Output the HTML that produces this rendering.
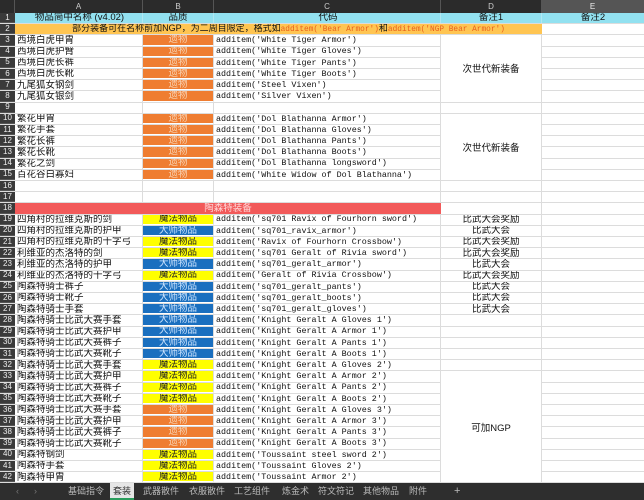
<!DOCTYPE html>
<html><head><meta charset="utf-8"><style>
*{margin:0;padding:0;box-sizing:border-box}
body{width:644px;height:500px;overflow:hidden;background:#fff;position:relative;font-family:"Liberation Sans","Noto Sans CJK SC",sans-serif;font-size:9.5px;color:#111}
.r{position:absolute;left:0;width:644px;height:11.2px;border-bottom:1px solid #dcdcdc}
.c{position:absolute;top:0;height:100%;display:flex;align-items:center;white-space:nowrap;overflow:hidden;line-height:1}
.n{left:0;width:15px;background:#3a3a3a;color:#eee;justify-content:center;font-size:8px;border-bottom:1px solid #555}
.a{left:15px;width:128px;padding-left:2px;border-right:1px solid #dcdcdc}
.b{left:143px;width:71px;justify-content:center;border-right:1px solid #dcdcdc}
.cc{left:214px;width:227px;padding-left:2px;font-family:"Liberation Mono","Noto Sans CJK SC",monospace;font-size:8.4px;border-right:1px solid #dcdcdc}
.d{left:441px;width:101px;justify-content:center;border-right:1px solid #dcdcdc}
.e{left:542px;width:102px}
.o{background:#ef7d31;color:#f8d4b5;border-bottom:1px solid #fff}
.y{background:#ffff00;color:#222;border-bottom:1px solid #fff}
.bl{background:#1a6fbf;color:#cfe6ff;border-bottom:1px solid #fff}
.hd{position:absolute;top:0;height:13px;background:#2b2b2b;color:#ccc;text-align:center;line-height:13px;font-size:8px;border-right:1px solid #555}
.m{position:absolute;background:#fff;display:flex;align-items:center;justify-content:center;font-size:9.5px;border-right:1px solid #dcdcdc;border-bottom:1px solid #dcdcdc}
.tabs{position:absolute;left:0;top:483px;width:644px;height:17px;background:#2e2e2e;color:#bbb;font-size:9px}
.t{position:absolute;top:0;height:17px;line-height:17px}
.k{font-family:"Liberation Mono",monospace;font-size:7.8px;color:#e8601c}
</style></head><body>
<div class="hd" style="left:0;width:15px;background:#2b2b2b"></div>
<div class="hd" style="left:15px;width:128px">A</div>
<div class="hd" style="left:143px;width:71px">B</div>
<div class="hd" style="left:214px;width:227px">C</div>
<div class="hd" style="left:441px;width:101px">D</div>
<div class="hd" style="left:542px;width:102px;background:#555;color:#eee">E</div>

<div class="r" style="top:13px;background:#92e1f0"><div class="c n">1</div><div class="c a" style="justify-content:center;border-color:#b0e8f3">物品简中名称 (v4.02)</div><div class="c b" style="border-color:#b0e8f3">品质</div><div class="c cc" style="justify-content:center;font-family:'Liberation Sans','Noto Sans CJK SC',sans-serif;font-size:9.5px;border-color:#b0e8f3">代码</div><div class="c d" style="border-color:#b0e8f3">备注1</div><div class="c e" style="justify-content:center">备注2</div></div>
<div class="r" style="top:24.2px"><div class="c n">2</div><div class="c" style="left:15px;width:527px;background:#ffc552;justify-content:center;padding-left:20px;font-size:9px"><span>部分装备可在名称前加NGP，为二周目限定，格式如<span class="k">additem('Bear Armor')</span>和<span class="k">additem('NGP Bear Armor')</span></span></div></div>

<div class="r" style="top:35.4px"><div class="c n">3</div><div class="c a">西境白虎甲胄</div><div class="c b o">遗物</div><div class="c cc">additem('White Tiger Armor')</div></div>
<div class="r" style="top:46.6px"><div class="c n">4</div><div class="c a">西境白虎护臂</div><div class="c b o">遗物</div><div class="c cc">additem('White Tiger Gloves')</div></div>
<div class="r" style="top:57.8px"><div class="c n">5</div><div class="c a">西境白虎长裤</div><div class="c b o">遗物</div><div class="c cc">additem('White Tiger Pants')</div></div>
<div class="r" style="top:69px"><div class="c n">6</div><div class="c a">西境白虎长靴</div><div class="c b o">遗物</div><div class="c cc">additem('White Tiger Boots')</div></div>
<div class="r" style="top:80.2px"><div class="c n">7</div><div class="c a">九尾狐女钢剑</div><div class="c b o">遗物</div><div class="c cc">additem('Steel Vixen')</div></div>
<div class="r" style="top:91.4px"><div class="c n">8</div><div class="c a">九尾狐女银剑</div><div class="c b o">遗物</div><div class="c cc">additem('Silver Vixen')</div></div>
<div class="r" style="top:102.6px"><div class="c n">9</div><div class="c a"></div><div class="c b"></div><div class="c cc"></div><div class="c d"></div></div>
<div class="r" style="top:113.8px"><div class="c n">10</div><div class="c a">繁花甲胄</div><div class="c b o">遗物</div><div class="c cc">additem('Dol Blathanna Armor')</div></div>
<div class="r" style="top:125px"><div class="c n">11</div><div class="c a">繁花手套</div><div class="c b o">遗物</div><div class="c cc">additem('Dol Blathanna Gloves')</div></div>
<div class="r" style="top:136.2px"><div class="c n">12</div><div class="c a">繁花长裤</div><div class="c b o">遗物</div><div class="c cc">additem('Dol Blathanna Pants')</div></div>
<div class="r" style="top:147.4px"><div class="c n">13</div><div class="c a">繁花长靴</div><div class="c b o">遗物</div><div class="c cc">additem('Dol Blathanna Boots')</div></div>
<div class="r" style="top:158.6px"><div class="c n">14</div><div class="c a">繁花之剑</div><div class="c b o">遗物</div><div class="c cc">additem('Dol Blathanna longsword')</div></div>
<div class="r" style="top:169.8px"><div class="c n">15</div><div class="c a">百花谷白寡妇</div><div class="c b o">遗物</div><div class="c cc">additem('White Widow of Dol Blathanna')</div></div>
<div class="r" style="top:181px"><div class="c n">16</div><div class="c a"></div><div class="c b"></div><div class="c cc"></div><div class="c d"></div></div>
<div class="r" style="top:192.2px"><div class="c n">17</div><div class="c a"></div><div class="c b"></div><div class="c cc"></div><div class="c d"></div></div>
<div class="r" style="top:203.4px"><div class="c n">18</div><div class="c" style="left:15px;width:426px;background:#f25a5a;color:#ffd8d8;justify-content:center">陶森特装备</div><div class="c d"></div></div>
<div class="r" style="top:214.6px"><div class="c n">19</div><div class="c a">四角村的拉维克斯的剑</div><div class="c b y">魔法物品</div><div class="c cc">additem('sq701 Ravix of Fourhorn sword')</div><div class="c d">比武大会奖励</div></div>
<div class="r" style="top:225.8px"><div class="c n">20</div><div class="c a">四角村的拉维克斯的护甲</div><div class="c b bl">大师物品</div><div class="c cc">additem('sq701_ravix_armor')</div><div class="c d">比武大会</div></div>
<div class="r" style="top:237px"><div class="c n">21</div><div class="c a">四角村的拉维克斯的十字弓</div><div class="c b y">魔法物品</div><div class="c cc">additem('Ravix of Fourhorn Crossbow')</div><div class="c d">比武大会奖励</div></div>
<div class="r" style="top:248.2px"><div class="c n">22</div><div class="c a">利维亚的杰洛特的剑</div><div class="c b y">魔法物品</div><div class="c cc">additem('sq701 Geralt of Rivia sword')</div><div class="c d">比武大会奖励</div></div>
<div class="r" style="top:259.4px"><div class="c n">23</div><div class="c a">利维亚的杰洛特的护甲</div><div class="c b bl">大师物品</div><div class="c cc">additem('sq701_geralt_armor')</div><div class="c d">比武大会</div></div>
<div class="r" style="top:270.6px"><div class="c n">24</div><div class="c a">利维亚的杰洛特的十字弓</div><div class="c b y">魔法物品</div><div class="c cc">additem('Geralt of Rivia Crossbow')</div><div class="c d">比武大会奖励</div></div>
<div class="r" style="top:281.8px"><div class="c n">25</div><div class="c a">陶森特骑士裤子</div><div class="c b bl">大师物品</div><div class="c cc">additem('sq701_geralt_pants')</div><div class="c d">比武大会</div></div>
<div class="r" style="top:293px"><div class="c n">26</div><div class="c a">陶森特骑士靴子</div><div class="c b bl">大师物品</div><div class="c cc">additem('sq701_geralt_boots')</div><div class="c d">比武大会</div></div>
<div class="r" style="top:304.2px"><div class="c n">27</div><div class="c a">陶森特骑士手套</div><div class="c b bl">大师物品</div><div class="c cc">additem('sq701_geralt_gloves')</div><div class="c d">比武大会</div></div>
<div class="r" style="top:315.4px"><div class="c n">28</div><div class="c a">陶森特骑士比武大赛手套</div><div class="c b bl">大师物品</div><div class="c cc">additem('Knight Geralt A Gloves 1')</div><div class="c d"></div></div>
<div class="r" style="top:326.6px"><div class="c n">29</div><div class="c a">陶森特骑士比武大赛护甲</div><div class="c b bl">大师物品</div><div class="c cc">additem('Knight Geralt A Armor 1')</div><div class="c d"></div></div>
<div class="r" style="top:337.8px"><div class="c n">30</div><div class="c a">陶森特骑士比武大赛裤子</div><div class="c b bl">大师物品</div><div class="c cc">additem('Knight Geralt A Pants 1')</div><div class="c d"></div></div>
<div class="r" style="top:349px"><div class="c n">31</div><div class="c a">陶森特骑士比武大赛靴子</div><div class="c b bl">大师物品</div><div class="c cc">additem('Knight Geralt A Boots 1')</div><div class="c d"></div></div>
<div class="r" style="top:360.2px"><div class="c n">32</div><div class="c a">陶森特骑士比武大赛手套</div><div class="c b y">魔法物品</div><div class="c cc">additem('Knight Geralt A Gloves 2')</div><div class="c d"></div></div>
<div class="r" style="top:371.4px"><div class="c n">33</div><div class="c a">陶森特骑士比武大赛护甲</div><div class="c b y">魔法物品</div><div class="c cc">additem('Knight Geralt A Armor 2')</div></div>
<div class="r" style="top:382.6px"><div class="c n">34</div><div class="c a">陶森特骑士比武大赛裤子</div><div class="c b y">魔法物品</div><div class="c cc">additem('Knight Geralt A Pants 2')</div></div>
<div class="r" style="top:393.8px"><div class="c n">35</div><div class="c a">陶森特骑士比武大赛靴子</div><div class="c b y">魔法物品</div><div class="c cc">additem('Knight Geralt A Boots 2')</div></div>
<div class="r" style="top:405px"><div class="c n">36</div><div class="c a">陶森特骑士比武大赛手套</div><div class="c b o">遗物</div><div class="c cc">additem('Knight Geralt A Gloves 3')</div></div>
<div class="r" style="top:416.2px"><div class="c n">37</div><div class="c a">陶森特骑士比武大赛护甲</div><div class="c b o">遗物</div><div class="c cc">additem('Knight Geralt A Armor 3')</div></div>
<div class="r" style="top:427.4px"><div class="c n">38</div><div class="c a">陶森特骑士比武大赛裤子</div><div class="c b o">遗物</div><div class="c cc">additem('Knight Geralt A Pants 3')</div></div>
<div class="r" style="top:438.6px"><div class="c n">39</div><div class="c a">陶森特骑士比武大赛靴子</div><div class="c b o">遗物</div><div class="c cc">additem('Knight Geralt A Boots 3')</div></div>
<div class="r" style="top:449.8px"><div class="c n">40</div><div class="c a">陶森特钢剑</div><div class="c b y">魔法物品</div><div class="c cc">additem('Toussaint steel sword 2')</div></div>
<div class="r" style="top:461px"><div class="c n">41</div><div class="c a">陶森特手套</div><div class="c b y">魔法物品</div><div class="c cc">additem('Toussaint Gloves 2')</div></div>
<div class="r" style="top:472.2px"><div class="c n">42</div><div class="c a">陶森特甲胄</div><div class="c b y">魔法物品</div><div class="c cc">additem('Toussaint Armor 2')</div></div>

<div class="m" style="left:441px;top:35.4px;width:101px;height:67.2px">次世代新装备</div>
<div class="m" style="left:441px;top:113.8px;width:101px;height:67.2px">次世代新装备</div>
<div class="m" style="left:441px;top:371.4px;width:101px;height:112px">可加NGP</div>

<div class="tabs">
<span class="t" style="left:16px;color:#777">&lsaquo;</span><span class="t" style="left:34px;color:#777">&rsaquo;</span>
<span class="t" style="left:68px">基础指令</span>
<span class="t" style="left:110px;width:24px;background:#e6e6e6;color:#333;text-align:center;border-bottom:2px solid #2a9d5c">套装</span>
<span class="t" style="left:143px">武器散件</span>
<span class="t" style="left:189px">衣服散件</span>
<span class="t" style="left:234px">工艺组件</span>
<span class="t" style="left:282px">炼金术</span>
<span class="t" style="left:318px">符文符记</span>
<span class="t" style="left:363px">其他物品</span>
<span class="t" style="left:409px">附件</span>
<span class="t" style="left:454px;font-size:11px">+</span>
</div>
</body></html>
